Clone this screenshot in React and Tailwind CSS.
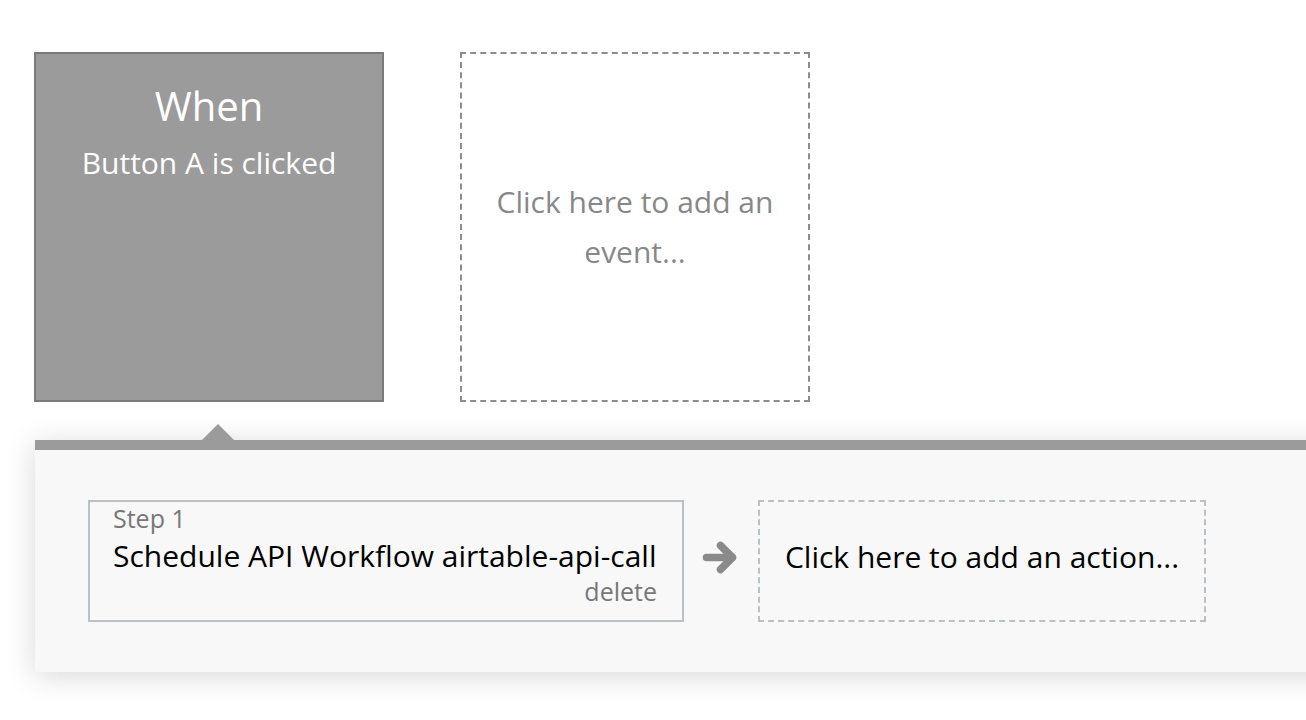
export default function App() {
  return (
    <div className="min-h-screen w-full overflow-hidden bg-white pl-[34px] pt-[52px]" style={{ fontFamily: '"Open Sans", sans-serif' }}>
      {/* events row */}
      <div className="flex gap-[76px]">
        <div className="flex h-[350px] w-[350px] flex-col items-center border-2 border-[#7a7a7a] bg-[#9b9b9b] text-white">
          <div className="mt-[26px] text-[40px] leading-[52px]">When</div>
          <div className="mt-[11px] text-[30px] leading-[40px]">Button A is clicked</div>
        </div>
        <div className="flex h-[350px] w-[350px] items-center justify-center border-2 border-dashed border-[#8c8c8c] bg-white px-6 text-center">
          <div className="text-[30px] leading-[50px] text-[#888]">Click here to add an event...</div>
        </div>
      </div>

      {/* actions panel */}
      <div className="relative ml-[1px] mt-[38px] w-[1320px] rounded-bl-[3px] bg-[#f8f8f8] shadow-[0_4px_30px_rgba(0,0,0,0.16)]">
        <div className="absolute left-[167px] top-[-16px] h-0 w-0 border-x-[16px] border-b-[16px] border-x-transparent border-b-[#9b9b9b]"></div>
        <div className="h-[10px] bg-[#9b9b9b]"></div>
        <div className="flex items-start pb-[50px] pl-[53px] pt-[50px]">
          <div className="flex h-[122px] w-[596px] flex-col border-2 border-[#bac1c6] bg-[#f8f8f8] pl-[23px] pr-[25px]">
            <div className="mt-[2px] text-[25px] leading-[28px] text-[#777]">Step 1</div>
            <div className="mt-[6px] text-[30px] leading-[36px] text-black">Schedule API Workflow airtable-api-call</div>
            <div className="mt-[3px] self-end text-[25px] leading-[28px] text-[#777]">delete</div>
          </div>
          <div className="ml-[18px] mr-[21px] mt-[40px] h-[35px] w-[35px] text-[#8a8a8a]">
            <svg viewBox="0 0 35 35" width="35" height="35" fill="none" stroke="currentColor" strokeWidth="7.5" strokeLinecap="round" strokeLinejoin="round">
              <path d="M4.5 17.5H30" />
              <path d="M18.5 5.5L30.5 17.5L18.5 29.5" />
            </svg>
          </div>
          <div className="flex h-[122px] w-[448px] items-center justify-center border-2 border-dashed border-[#bac1c6] pb-[8px]">
            <div className="text-[30px] leading-[38px] text-black">Click here to add an action...</div>
          </div>
        </div>
      </div>
    </div>
  )
}
